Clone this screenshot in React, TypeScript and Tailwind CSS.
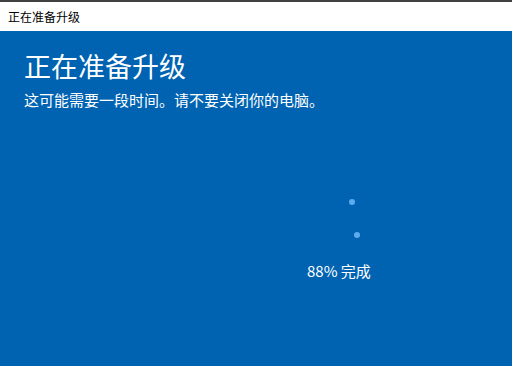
export default function App() {
  const font = { fontFamily: '"Microsoft YaHei", "Noto Sans CJK SC", sans-serif' };
  return (
    <div className="w-[512px] h-[366px] flex flex-col overflow-hidden" style={font}>
      <div className="h-[2px] bg-[#404040]" />
      <div className="h-[29px] bg-white flex items-center pl-[8px] text-[12px] text-black">正在准备升级</div>
      <div className="flex-1 bg-[#0063b1] text-white relative">
        <div className="pl-[24px] pt-[16px] text-[27px] leading-[38px]">正在准备升级</div>
        <div className="pl-[24px] pt-[4px] text-[15px] leading-[22px]">这可能需要一段时间。请不要关闭你的电脑。</div>
        <div className="absolute left-[349px] top-[168px] w-[6px] h-[6px] rounded-full bg-[#5cabf0]" />
        <div className="absolute left-[354px] top-[201px] w-[6px] h-[6px] rounded-full bg-[#5cabf0]" />
        <div className="absolute left-[307px] top-[230px] text-[15px] leading-[20px]">88% 完成</div>
      </div>
    </div>
  );
}
